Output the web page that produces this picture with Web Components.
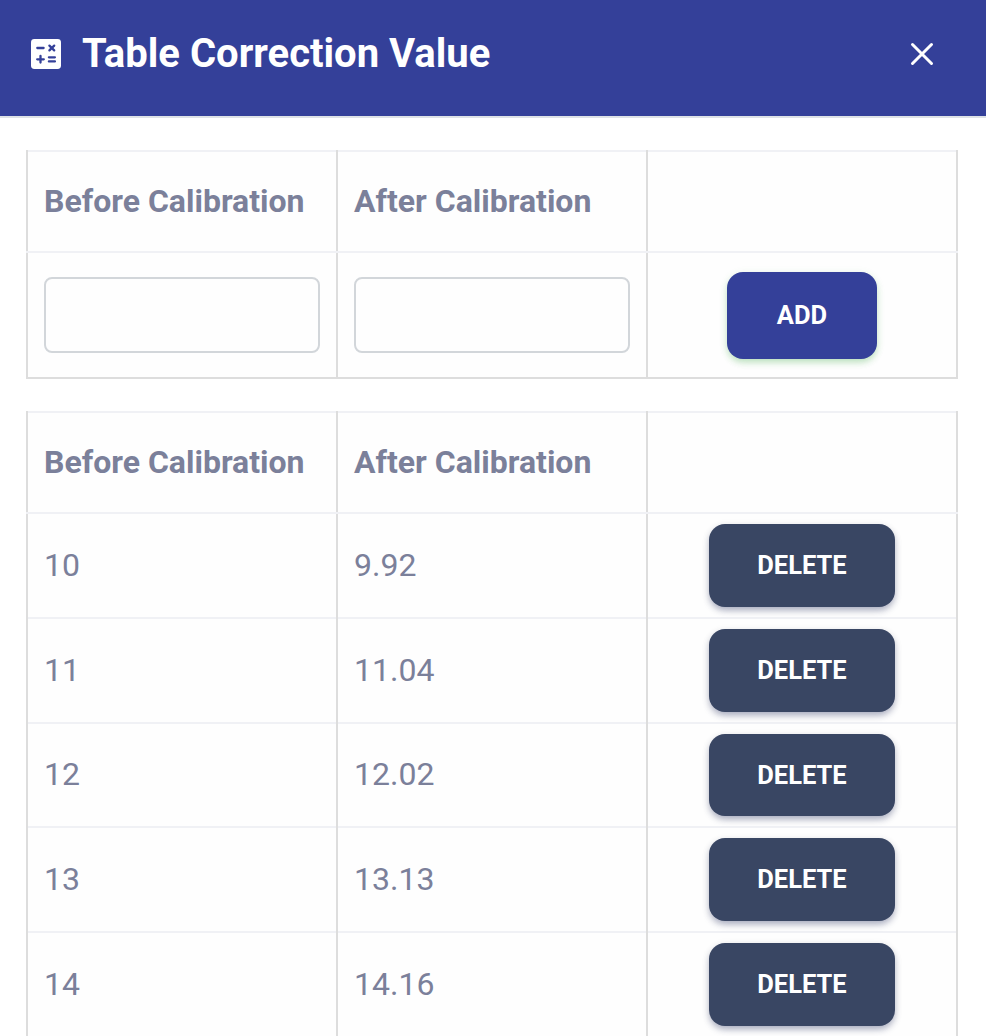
<!DOCTYPE html>
<html lang="en">
<head>
<meta charset="UTF-8">
<title>Table Correction Value</title>
<style>
    body { margin: 0; height: 1036px; overflow: hidden; background: #fff; font-family: Roboto, "Liberation Sans", sans-serif; color: #7b809a; }
</style>
</head>
<body>
<correction-dialog heading="Table Correction Value">
    <calibration-table class="entry" mode="entry"></calibration-table>
    <calibration-table mode="list"></calibration-table>
</correction-dialog>

<script>
class CorrectionDialog extends HTMLElement {
    connectedCallback() {
        this.attachShadow({ mode: 'open' });
        this.shadowRoot.innerHTML = `
        <style>
            :host { display: block; }
            header { display: flex; align-items: flex-start; box-sizing: border-box; height: 118px; padding: 30px 51px 0 30px; background: #344099; border-bottom: 2px solid #dee2e6; color: #fff; }
            .icon { flex: none; width: 32px; height: 32px; margin-top: 8px; }
            h1 { flex: 1; margin: 0 0 0 20px; font-size: 40px; line-height: 47px; font-weight: 700; white-space: nowrap; }
            button { display: flex; padding: 0; margin-top: 11px; border: 0; background: none; color: inherit; }
            main { display: flex; flex-direction: column; gap: 32px; padding: 32px 28px 0 26px; }
        </style>
        <header>
            <svg class="icon" viewBox="0 0 32 32" fill="none">
                <rect x="1" y="1" width="30" height="30" rx="3.4" fill="#fff"/>
                <path d="M7.3 10h6.3M19.4 7.6l4.8 4.8M24.2 7.6l-4.8 4.8M7.2 21.3h6.6M10.5 18v6.6M18.9 19.3h6M18.9 23.4h6" stroke="#344099" stroke-width="2.3" stroke-linecap="round"/>
            </svg>
            <h1>${this.getAttribute('heading')}</h1>
            <button aria-label="Close">
                <svg width="26" height="26" viewBox="0 0 26 26" fill="none" stroke="#fff" stroke-width="3" stroke-linecap="round"><path d="M3.5 3.5l19 19M22.5 3.5l-19 19"/></svg>
            </button>
        </header>
        <main><slot></slot></main>`;
    }
}
customElements.define('correction-dialog', CorrectionDialog);

class ActionButton extends HTMLElement {
    connectedCallback() {
        this.attachShadow({ mode: 'open' });
        this.shadowRoot.innerHTML = `
        <style>
            :host { display: block; }
            button { display: flex; align-items: center; justify-content: center; box-sizing: border-box; width: 186px; height: 82.75px; padding: 1px 0 0; border: 0; border-radius: 16px; background: #394663; color: #fff; font: 700 25.5px/1 Roboto, "Liberation Sans", sans-serif; text-transform: uppercase; box-shadow: 0 4px 7px -1px rgba(52, 63, 112, .4), 0 2px 8px rgba(0, 0, 0, .08); }
            :host([variant="add"]) button { width: 150px; height: 87px; background: #344099; box-shadow: 0 4px 7px -1px rgba(76, 175, 80, .32), 0 2px 8px rgba(76, 175, 80, .12); }
        </style>
        <button><slot></slot></button>`;
    }
}
customElements.define('action-button', ActionButton);

class CalibrationTable extends HTMLElement {
    constructor() {
        super();
        this.values = [['10', '9.92'], ['11', '11.04'], ['12', '12.02'], ['13', '13.13'], ['14', '14.16']];
    }

    connectedCallback() {
        this.attachShadow({ mode: 'open' });
        this.render();
    }

    renderRow(cells, type) {
        return `<div class="row ${type}">${cells.map((cell) => `<div class="cell"><div class="inner">${cell}</div></div>`).join('')}</div>`;
    }

    renderBody() {
        if (this.getAttribute('mode') === 'entry') {
            return this.renderRow([
                '<input aria-label="Before Calibration">',
                '<input aria-label="After Calibration">',
                '<action-button variant="add">Add</action-button>'
            ], 'form');
        }
        return this.values.map(([before, after]) => this.renderRow([`<span>${before}</span>`, `<span>${after}</span>`, '<action-button>Delete</action-button>'], 'data')).join('');
    }

    render() {
        this.shadowRoot.innerHTML = `
        <style>
            :host { display: block; width: 932px; font-size: 32px; line-height: 48px; }
            .row { display: grid; grid-template-columns: 310px 310px 312px; box-sizing: border-box; background: #fefefe; }
            .cell { display: flex; border-left: 2px solid #ddd; }
            .cell:last-child { border-right: 2px solid #ddd; }
            .inner { flex: 1; display: flex; align-items: center; box-sizing: border-box; padding: 0 16px; }
            .cell:last-child .inner { justify-content: center; }
            .head { height: 103px; border-bottom: 2px solid #f0f1f5; font-weight: 700; }
            .head .inner { padding-bottom: 2px; border-top: 2px solid #f0f1f5; }
            .form { height: 126px; border-bottom: 2px solid #ddd; }
            .data { height: 104.75px; }
            .data .inner { border-bottom: 2px solid #f0f1f5; }
            .data span { padding-bottom: 1px; }
            input { box-sizing: border-box; width: 276px; height: 76px; padding: 0 16px; border: 2px solid #d2d6da; border-radius: 8px; background: transparent; outline: none; font: inherit; color: inherit; }
        </style>
        ${this.renderRow(['Before Calibration', 'After Calibration', ''], 'head')}
        ${this.renderBody()}`;
    }
}
customElements.define('calibration-table', CalibrationTable);
</script>
</body>
</html>
